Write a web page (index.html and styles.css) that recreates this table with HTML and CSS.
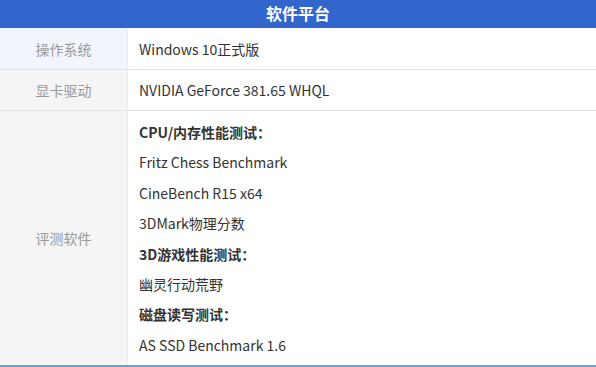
FILE: index.html
```html
<!DOCTYPE html>
<html>
<head><meta charset="utf-8"><link rel="stylesheet" href="styles.css"></head>
<body>
<div class="table">
  <div class="head">软件平台</div>
  <div class="row r1">
    <div class="label">操作系统</div>
    <div class="val">Windows 10正式版</div>
  </div>
  <div class="row r2">
    <div class="label">显卡驱动</div>
    <div class="val">NVIDIA GeForce 381.65 WHQL</div>
  </div>
  <div class="row r3">
    <div class="label">评测软件</div>
    <div class="val list">
      <p class="b">CPU/内存性能测试：</p>
      <p>Fritz Chess Benchmark</p>
      <p>CineBench R15 x64</p>
      <p>3DMark物理分数</p>
      <p class="b">3D游戏性能测试：</p>
      <p>幽灵行动荒野</p>
      <p class="b">磁盘读写测试：</p>
      <p>AS SSD Benchmark 1.6</p>
    </div>
  </div>
</div>
</body>
</html>
```
FILE: styles.css
```css
html, body { margin: 0; padding: 0; background: #fff; }
body { font-family: "Noto Sans CJK SC", "Noto Sans", sans-serif; font-size: 14px; color: #333; }
.table { width: 596px; border-bottom: 2px solid #5aa6dc; }
.head { height: 28px; background: #3366cc; color: #fff; font-weight: bold; font-size: 16px; text-align: center; line-height: 26px; }
.row { display: flex; border-top: 1px solid #e3e3e3; }
.r1 { border-top: none; height: 41px; }
.r2 { height: 40px; }
.label { width: 127px; flex: none; border-right: 1px solid #ebebeb; background: #f5f5f5; color: #999; display: flex; align-items: center; justify-content: center; }
.r1 .label { background: #f2f5fb; }
.val { padding-left: 11px; display: flex; align-items: center; }
.list { display: block; padding: 6px 0 5px 11px; }
.list p { margin: 0; line-height: 30.4px; }
.list .b { font-weight: bold; }
```
